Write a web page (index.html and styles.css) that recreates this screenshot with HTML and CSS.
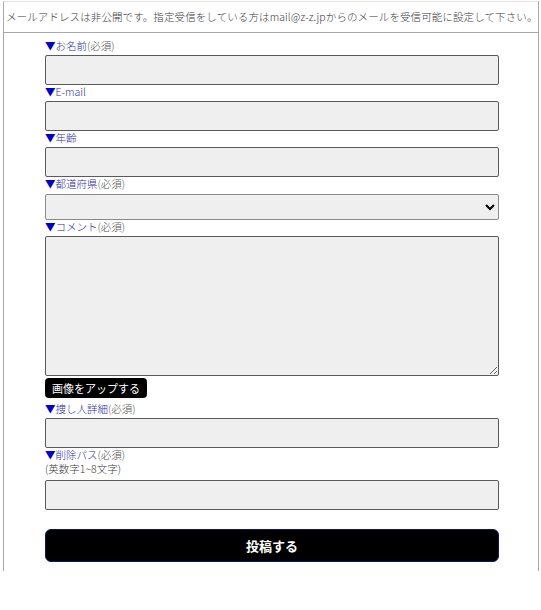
FILE: index.html
```html
<!DOCTYPE html>
<html lang="ja">
<head>
<meta charset="utf-8">
<title>投稿フォーム</title>
<link rel="stylesheet" href="styles.css">
</head>
<body>
<div class="box">
  <p class="notice">メールアドレスは非公開です。指定受信をしている方はmail@z-z.jpからのメールを受信可能に設定して下さい。</p>
  <form class="form">
    <label class="label"><span class="tri">▼</span>お名前<span class="req">(必須)</span></label>
    <input class="field" type="text">
    <label class="label"><span class="tri">▼</span>E-mail</label>
    <input class="field" type="text">
    <label class="label"><span class="tri">▼</span>年齢</label>
    <input class="field" type="text">
    <label class="label"><span class="tri">▼</span>都道府県<span class="req">(必須)</span></label>
    <select class="field select"><option></option></select>
    <label class="label"><span class="tri">▼</span>コメント<span class="req">(必須)</span></label>
    <textarea class="field area"></textarea>
    <div class="upload-row"><button type="button" class="upload">画像をアップする</button></div>
    <label class="label label-gap"><span class="tri">▼</span>捜し人詳細<span class="req">(必須)</span></label>
    <input class="field" type="text">
    <label class="label label-tight"><span class="tri">▼</span>削除パス<span class="req">(必須)</span></label>
    <div class="hint">(英数字1~8文字)</div>
    <input class="field" type="text">
    <button type="button" class="submit">投稿する</button>
  </form>
</div>
</body>
</html>
```
FILE: styles.css
```css
html, body {
  margin: 0;
  padding: 0;
  background: #fff;
}
body {
  font-family: "Noto Sans CJK JP", "Noto Sans", sans-serif;
  color: #333;
}
.box {
  margin: 1px 2px 0 3px;
  border-top: 1px solid #e2e2e2;
  border-left: 1px solid #a8a8a8;
  border-right: 1px solid #a8a8a8;
  padding-bottom: 9px;
}
.notice {
  margin: 0;
  height: 30px;
  line-height: 30px;
  padding-left: 2px;
  font-size: 10.5px;
  font-weight: 300;
  letter-spacing: 0.1px;
  white-space: nowrap;
  color: #3a3a3a;
  border-bottom: 1px solid #a8a8a8;
}
.form {
  display: flex;
  flex-direction: column;
  width: 454px;
  margin-left: 41px;
  padding-top: 6px;
}
.label {
  display: block;
  font-size: 10.5px;
  font-weight: 300;
  line-height: 14px;
  height: 14px;
  color: #2c2cb0;
  margin-bottom: 2px;
}
.tri {
  color: #0000cc;
  font-weight: 400;
}
.req {
  color: #555;
}
.field {
  box-sizing: border-box;
  width: 454px;
  height: 30px;
  margin: 0;
  background: #efefef;
  border: 1px solid #5a5a5a;
  border-radius: 2px;
  font-family: inherit;
}
.select {
  height: 26px;
  border-color: #8a8a8a;
  margin-top: 1px;
}
.area {
  height: 140px;
  resize: vertical;
}
.upload-row {
  display: flex;
  margin-top: 2px;
}
.upload {
  height: 20px;
  padding: 0 7px;
  background: #000;
  color: #fff;
  border: none;
  border-radius: 4px;
  font-family: inherit;
  font-size: 11px;
  line-height: 20px;
}
.label-gap {
  margin-top: 4px;
}
.label-tight {
  margin-bottom: 0;
}
.hint {
  font-size: 10.5px;
  font-weight: 300;
  line-height: 14px;
  color: #3a3a3a;
  margin-bottom: 4px;
}
.submit {
  margin-top: 19px;
  box-sizing: border-box;
  width: 454px;
  height: 33px;
  background: #000;
  color: #fff;
  border: 1px solid #10107a;
  border-radius: 6px;
  font-family: inherit;
  font-size: 13px;
  font-weight: bold;
}
```
